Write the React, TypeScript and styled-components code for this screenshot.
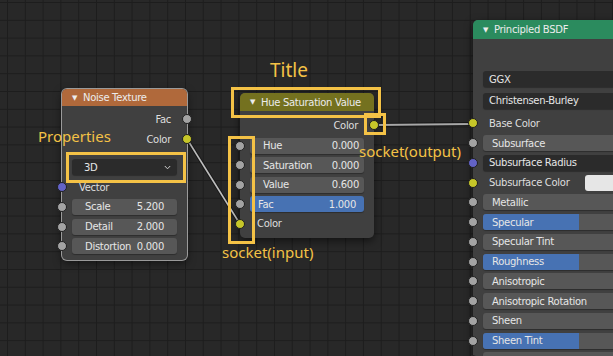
import React from "react";
import styled, { createGlobalStyle } from "styled-components";

const GlobalStyle = createGlobalStyle`
  html, body {
    margin: 0;
    padding: 0;
    background: #282828;
  }
`;

const UI_FONT = `"DejaVu Sans", "Liberation Sans", sans-serif`;
const NOTE_FONT = `"Noto Sans", "Open Sans", sans-serif`;
const NOTE_COLOR = "#f4c246";

const Canvas = styled.div`
  position: relative;
  width: 613px;
  height: 356px;
  overflow: hidden;
  background-color: #282828;
  background-image: linear-gradient(#1d1d1d 1px, transparent 1px),
    linear-gradient(90deg, #1d1d1d 1px, transparent 1px);
  background-size: 17.8px 17.8px;
  background-position: 7px 2px;
  font-family: ${UI_FONT};
  font-size: 10px;
  letter-spacing: -0.3px;
  color: #e0e0e0;
`;

const Wires = styled.svg`
  position: absolute;
  inset: 0;
`;

const Node = styled.div<{ $x: number; $y: number; $w: number; $selected?: boolean }>`
  position: absolute;
  left: ${(p) => p.$x}px;
  top: ${(p) => p.$y}px;
  width: ${(p) => p.$w}px;
  background: #404040;
  border-radius: 5px;
  box-shadow: ${(p) => (p.$selected ? "0 0 0 1px #9a9a9a, " : "")}0 3px 8px rgba(0, 0, 0, 0.55);
`;

const Header = styled.div<{ $color: string; $h: number }>`
  height: ${(p) => p.$h}px;
  background: ${(p) => p.$color};
  border-radius: 5px 5px 0 0;
  display: flex;
  align-items: center;
  padding-left: 10px;
  gap: 5px;
  color: #ececec;
  white-space: nowrap;
`;

const Arrow = styled.span`
  font-size: 7px;
  width: 6px;
`;

const Body = styled.div<{ $top: number; $bottom: number }>`
  padding: ${(p) => p.$top}px 0 ${(p) => p.$bottom}px;
`;

const Row = styled.div<{ $h: number; $right?: boolean; $gap?: number; $pl?: number }>`
  position: relative;
  height: ${(p) => p.$h}px;
  margin-top: ${(p) => p.$gap ?? 0}px;
  display: flex;
  align-items: center;
  justify-content: ${(p) => (p.$right ? "flex-end" : "flex-start")};
  padding: 0 ${(p) => (p.$right ? 16 : 10)}px 0 ${(p) => p.$pl ?? 10}px;
  white-space: nowrap;
  color: #dedede;
`;

const SOCKET_COLORS = {
  gray: "#a3a3a3",
  yellow: "#c7c729",
  blue: "#6363c7",
};

const Socket = styled.span<{ $kind: keyof typeof SOCKET_COLORS; $side: "left" | "right" }>`
  position: absolute;
  top: 50%;
  ${(p) => p.$side}: -5px;
  width: 8px;
  height: 8px;
  margin-top: -5px;
  border-radius: 50%;
  background: ${(p) => SOCKET_COLORS[p.$kind]};
  border: 1px solid #202020;
  z-index: 2;
`;

const FIELD_TONES = {
  gray: "#575757",
  dark: "#2b2b2b",
  blue: "#4772b3",
};

const Field = styled.div<{ $tone: keyof typeof FIELD_TONES; $pl?: number; $pr?: number }>`
  position: relative;
  flex: 1;
  height: 16px;
  border-radius: 3px;
  background: ${(p) => FIELD_TONES[p.$tone]};
  display: flex;
  align-items: center;
  justify-content: space-between;
  padding: 0 ${(p) => p.$pr ?? 9}px 0 ${(p) => p.$pl ?? 9}px;
  color: #e6e6e6;
  overflow: hidden;
  box-shadow: 0 1px 1px rgba(0, 0, 0, 0.3);
`;

const Fill = styled.span`
  position: absolute;
  left: 0;
  top: 0;
  bottom: 0;
  background: #4772b3;
`;

const FieldText = styled.span`
  position: relative;
`;

const Chevron = styled.svg`
  width: 7px;
  height: 5px;
`;

const Swatch = styled.div`
  width: 90px;
  height: 16px;
  border-radius: 3px;
  background: #e6e6e6;
`;

const Note = styled.div<{ $x: number; $y: number; $size: number }>`
  position: absolute;
  left: ${(p) => p.$x}px;
  top: ${(p) => p.$y}px;
  font-family: ${NOTE_FONT};
  font-size: ${(p) => p.$size}px;
  letter-spacing: 0;
  line-height: 1;
  color: ${NOTE_COLOR};
  white-space: nowrap;
  z-index: 5;
`;

const Frame = styled.div<{ $x: number; $y: number; $w: number; $h: number }>`
  position: absolute;
  left: ${(p) => p.$x}px;
  top: ${(p) => p.$y}px;
  width: ${(p) => p.$w}px;
  height: ${(p) => p.$h}px;
  box-sizing: border-box;
  border: 3px solid ${NOTE_COLOR};
  z-index: 5;
`;

const NodeTitle = ({ color, h, title }: { color: string; h: number; title: string }) => (
  <Header $color={color} $h={h}>
    <Arrow>▼</Arrow>
    <span>{title}</span>
  </Header>
);

const Slider = ({ label, value, pct }: { label: string; value?: string; pct?: number }) => (
  <Field $tone="gray">
    {pct !== undefined && <Fill style={{ width: `${pct}%` }} />}
    <FieldText>{label}</FieldText>
    {value && <FieldText>{value}</FieldText>}
  </Field>
);

const principledRows: { label: string; socket: keyof typeof SOCKET_COLORS; pct?: number }[] = [
  { label: "Metallic", socket: "gray" },
  { label: "Specular", socket: "gray", pct: 50 },
  { label: "Specular Tint", socket: "gray" },
  { label: "Roughness", socket: "gray", pct: 50 },
  { label: "Anisotropic", socket: "gray" },
  { label: "Anisotropic Rotation", socket: "gray" },
  { label: "Sheen", socket: "gray" },
  { label: "Sheen Tint", socket: "gray", pct: 50 },
  { label: "Clearcoat", socket: "gray" },
];

export default function App() {
  return (
    <>
      <GlobalStyle />
      <Canvas>
        <Wires width={613} height={356}>
          <line x1={187} y1={139} x2={240} y2={224} stroke="#161616" strokeWidth={3.4} />
          <line x1={187} y1={139} x2={240} y2={224} stroke="#bdbdbd" strokeWidth={1.6} />
          <line x1={374} y1={125} x2={473} y2={124} stroke="#161616" strokeWidth={4} />
          <line x1={374} y1={125} x2={473} y2={124} stroke="#a8a8a8" strokeWidth={2} />
        </Wires>

        <Node $x={62} $y={89} $w={125} $selected>
          <NodeTitle color="#b0693b" h={17} title="Noise Texture" />
          <Body $top={3} $bottom={4}>
            <Row $h={20} $right>
              Fac
              <Socket $kind="gray" $side="right" />
            </Row>
            <Row $h={20} $right>
              Color
              <Socket $kind="yellow" $side="right" />
            </Row>
            <Row $h={16} $gap={10} $pl={10}>
              <Field $tone="dark" $pl={12} $pr={6}>
                <span>3D</span>
                <Chevron viewBox="0 0 7 5">
                  <path d="M0.8 1 L3.5 3.8 L6.2 1" fill="none" stroke="#cfcfcf" strokeWidth={1} />
                </Chevron>
              </Field>
            </Row>
            <Row $h={20} $gap={2} $pl={17}>
              Vector
              <Socket $kind="blue" $side="left" />
            </Row>
            {[
              ["Scale", "5.200"],
              ["Detail", "2.000"],
              ["Distortion", "0.000"],
            ].map(([label, value]) => (
              <Row key={label} $h={19.75}>
                <Socket $kind="gray" $side="left" />
                <Field $tone="gray" $pl={13} $pr={13}>
                  <FieldText>{label}</FieldText>
                  <FieldText>{value}</FieldText>
                </Field>
              </Row>
            ))}
          </Body>
        </Node>

        <Node $x={240} $y={93} $w={134}>
          <NodeTitle color="#74711f" h={18} title="Hue Saturation Value" />
          <Body $top={4} $bottom={4.5}>
            <Row $h={20} $right>
              Color
              <Socket $kind="yellow" $side="right" />
            </Row>
            {[
              ["Hue", "0.000"],
              ["Saturation", "0.000"],
              ["Value", "0.600"],
            ].map(([label, value], i) => (
              <Row key={label} $h={19.5} $gap={i === 0 ? 1 : 0}>
                <Socket $kind="gray" $side="left" />
                <Field $tone="gray" $pl={13} $pr={5}>
                  <FieldText>{label}</FieldText>
                  <FieldText>{value}</FieldText>
                </Field>
              </Row>
            ))}
            <Row $h={19.5}>
              <Socket $kind="gray" $side="left" />
              <Field $tone="blue" $pl={8} $pr={8}>
                <FieldText>Fac</FieldText>
                <FieldText>1.000</FieldText>
              </Field>
            </Row>
            <Row $h={19.5} $pl={17}>
              Color
              <Socket $kind="yellow" $side="left" />
            </Row>
          </Body>
        </Node>

        <Node $x={473} $y={20} $w={212}>
          <NodeTitle color="#2b8b5e" h={19} title="Principled BSDF" />
          <Body $top={32} $bottom={4}>
            <Row $h={16}>
              <Field $tone="dark" $pl={6}>
                <span>GGX</span>
              </Field>
            </Row>
            <Row $h={16} $gap={5.7}>
              <Field $tone="dark" $pl={6}>
                <span>Christensen-Burley</span>
              </Field>
            </Row>
            <Row $h={19.75} $gap={4.7} $pl={16}>
              Base Color
              <Socket $kind="yellow" $side="left" />
            </Row>
            <Row $h={19.75}>
              <Socket $kind="gray" $side="left" />
              <Slider label="Subsurface" />
            </Row>
            <Row $h={19.75}>
              <Socket $kind="blue" $side="left" />
              <Field $tone="dark" $pl={6}>
                <span>Subsurface Radius</span>
              </Field>
            </Row>
            <Row $h={19.75} $pl={16}>
              <Socket $kind="yellow" $side="left" />
              <span style={{ flex: 1 }}>Subsurface Color</span>
              <Swatch />
            </Row>
            {principledRows.map((r) => (
              <Row key={r.label} $h={19.75}>
                <Socket $kind={r.socket} $side="left" />
                <Slider label={r.label} pct={r.pct} />
              </Row>
            ))}
          </Body>
        </Node>

        <Note $x={270} $y={61} $size={19}>Title</Note>
        <Frame $x={231} $y={87} $w={150} $h={31} />

        <Note $x={38} $y={129} $size={15}>Properties</Note>
        <Frame $x={66} $y={152} $w={120} $h={31} />

        <Frame $x={364} $y={113} $w={22} $h={22} />
        <Note $x={359} $y={144} $size={15}>socket(output)</Note>

        <Frame $x={228} $y={136} $w={27} $h={108} />
        <Note $x={222} $y={245} $size={15}>socket(input)</Note>
      </Canvas>
    </>
  );
}
